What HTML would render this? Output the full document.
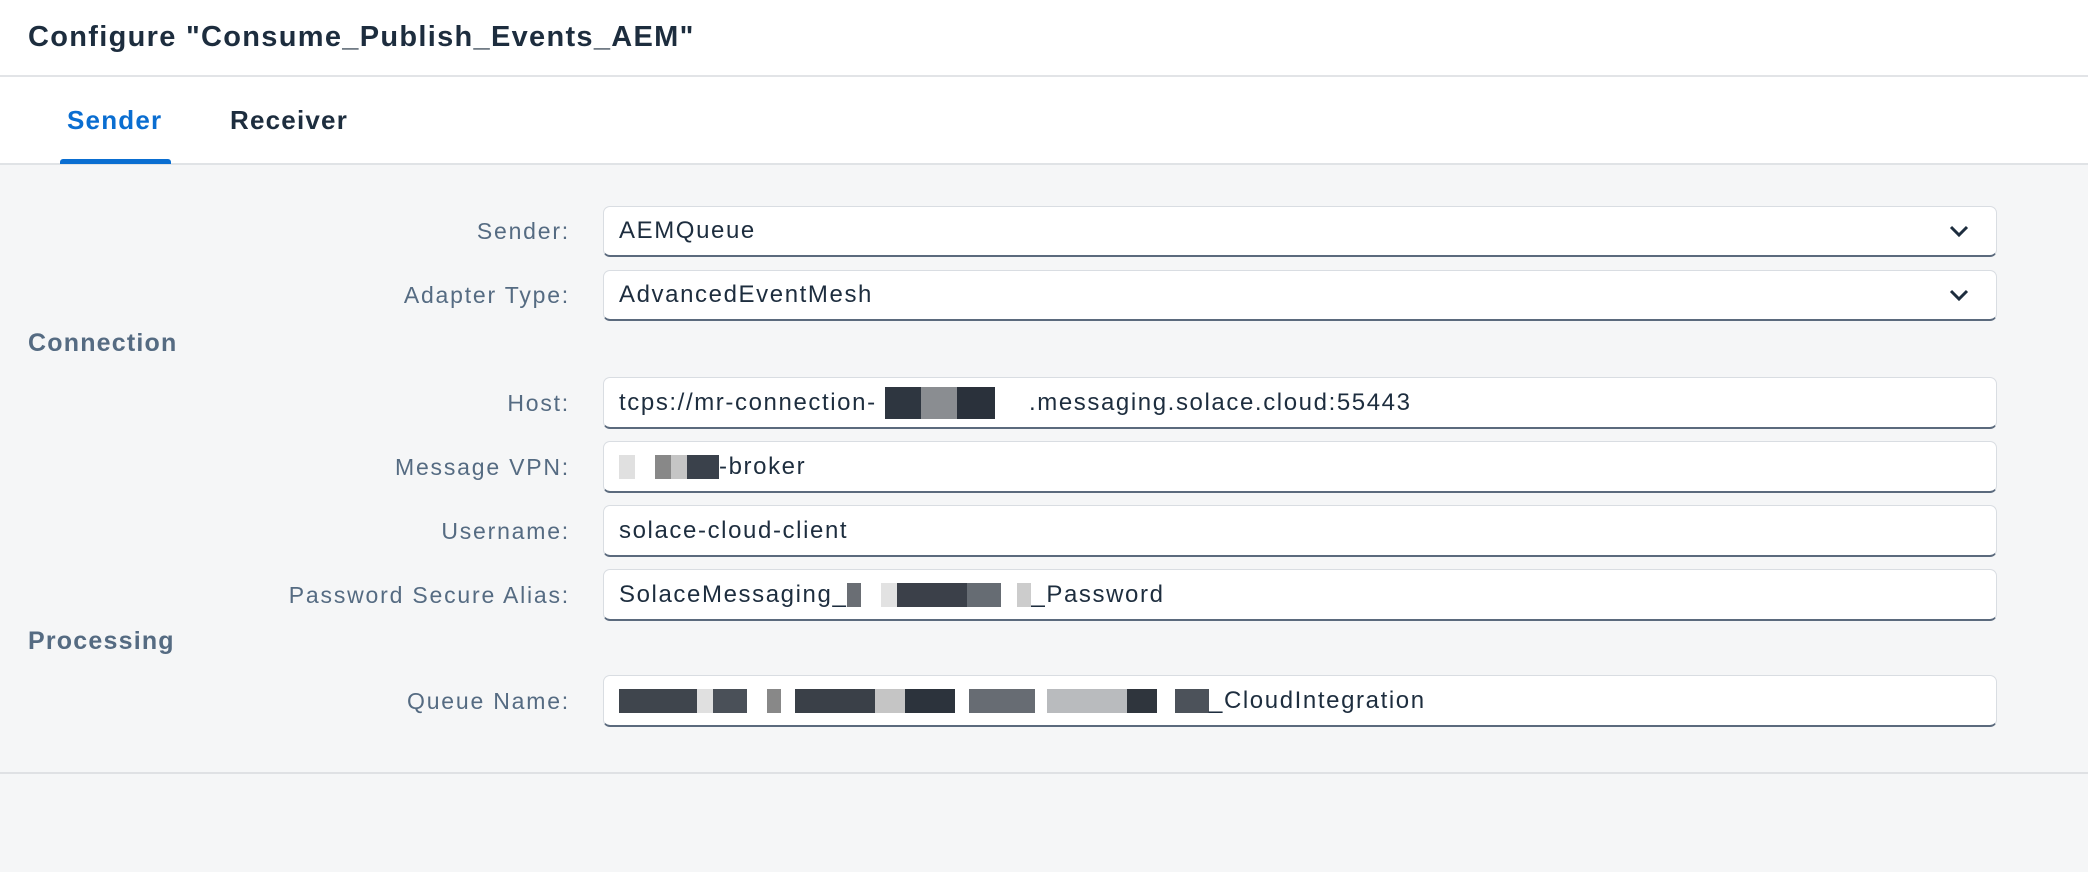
<!DOCTYPE html>
<html><head><meta charset="utf-8"><style>
*{box-sizing:border-box;margin:0;padding:0}
body{width:2088px;height:872px;background:#f5f6f7;font-family:"Liberation Sans",sans-serif;position:relative;overflow:hidden;color:#1d2d3e}
.hdr{position:absolute;left:0;top:0;width:2088px;height:77px;background:#fff;border-bottom:2px solid #e2e4e7}
.hdr h1{position:absolute;left:28px;top:21px;font-size:29px;letter-spacing:1.3px;font-weight:bold;color:#1d2d3e}
.tabs{position:absolute;left:0;top:77px;width:2088px;height:88px;background:#fff;border-bottom:2px solid #e0e3e6}
.tab{position:absolute;top:28px;font-size:26px;letter-spacing:1.2px;font-weight:bold}
.ul{position:absolute;left:60px;top:82px;width:111px;height:5px;background:#0a6ed1;border-radius:3px 3px 0 0}
.lbl{position:absolute;width:570px;text-align:right;font-size:23px;letter-spacing:1.8px;color:#556b82}
.sec{position:absolute;left:28px;font-size:25px;letter-spacing:1.2px;font-weight:bold;color:#556b82}
.in{position:absolute;left:603px;width:1394px;background:#fff;border:1px solid #d9dde2;border-bottom:2px solid #5b6a7d;border-radius:7px;font-size:24px;letter-spacing:1.6px;color:#1d2d3e;padding-left:15px;display:flex;align-items:center}
.chev{position:absolute;right:26px;top:17px}
.b{display:inline-block;height:24px;vertical-align:middle}
.line{position:absolute;left:0;top:772px;width:2088px;height:2px;background:#dfe1e4}
</style></head><body>
<div class="hdr"><h1>Configure "Consume_Publish_Events_AEM"</h1></div>
<div class="tabs">
<div class="tab" style="left:67px;color:#0a6ed1">Sender</div>
<div class="tab" style="left:230px;color:#1d2d3e">Receiver</div>
<div class="ul"></div>
</div>
<div class="lbl" style="top:218px">Sender:</div>
<div class="in" style="top:206px;height:51px">AEMQueue<svg class="chev" width="22" height="14" viewBox="0 0 22 14"><path d="M3 3l8 8 8-8" stroke="#1d2d3e" stroke-width="3" fill="none"/></svg></div>
<div class="lbl" style="top:282px">Adapter Type:</div>
<div class="in" style="top:270px;height:51px">AdvancedEventMesh<svg class="chev" width="22" height="14" viewBox="0 0 22 14"><path d="M3 3l8 8 8-8" stroke="#1d2d3e" stroke-width="3" fill="none"/></svg></div>
<div class="sec" style="top:329px">Connection</div>
<div class="lbl" style="top:390px">Host:</div>
<div class="in" style="top:377px;height:52px">tcps://mr-connection-&nbsp;<span class="b" style="width:36px;background:#2e3640;height:32px"></span><span class="b" style="width:36px;background:#8a8d91;height:32px"></span><span class="b" style="width:38px;background:#2a313b;height:32px"></span><span class="b" style="width:34px"></span>.messaging.solace.cloud:55443</div>
<div class="lbl" style="top:454px">Message VPN:</div>
<div class="in" style="top:441px;height:52px"><span class="b" style="width:16px;background:#e0e0e0"></span><span class="b" style="width:20px"></span><span class="b" style="width:16px;background:#888"></span><span class="b" style="width:16px;background:#c5c5c5"></span><span class="b" style="width:32px;background:#3a414b"></span>-broker</div>
<div class="lbl" style="top:518px">Username:</div>
<div class="in" style="top:505px;height:52px">solace-cloud-client</div>
<div class="lbl" style="top:582px">Password Secure Alias:</div>
<div class="in" style="top:569px;height:52px">SolaceMessaging_<span class="b" style="width:14px;background:#6a6e74"></span><span class="b" style="width:20px"></span><span class="b" style="width:16px;background:#e2e2e2"></span><span class="b" style="width:70px;background:#3b4049"></span><span class="b" style="width:34px;background:#666c73"></span><span class="b" style="width:16px"></span><span class="b" style="width:14px;background:#ccc"></span>_Password</div>
<div class="sec" style="top:627px">Processing</div>
<div class="lbl" style="top:688px">Queue Name:</div>
<div class="in" style="top:675px;height:52px"><span class="b" style="width:78px;background:#3f454d"></span><span class="b" style="width:16px;background:#e0e0e0"></span><span class="b" style="width:34px;background:#4a5058"></span><span class="b" style="width:20px"></span><span class="b" style="width:14px;background:#888"></span><span class="b" style="width:14px"></span><span class="b" style="width:80px;background:#3a4048"></span><span class="b" style="width:30px;background:#c5c5c5"></span><span class="b" style="width:50px;background:#2c333c"></span><span class="b" style="width:14px"></span><span class="b" style="width:66px;background:#676c73"></span><span class="b" style="width:12px"></span><span class="b" style="width:80px;background:#b9bbbe"></span><span class="b" style="width:30px;background:#2f353d"></span><span class="b" style="width:18px"></span><span class="b" style="width:34px;background:#4c525a"></span>_CloudIntegration</div>
<div class="line"></div>
</body></html>
